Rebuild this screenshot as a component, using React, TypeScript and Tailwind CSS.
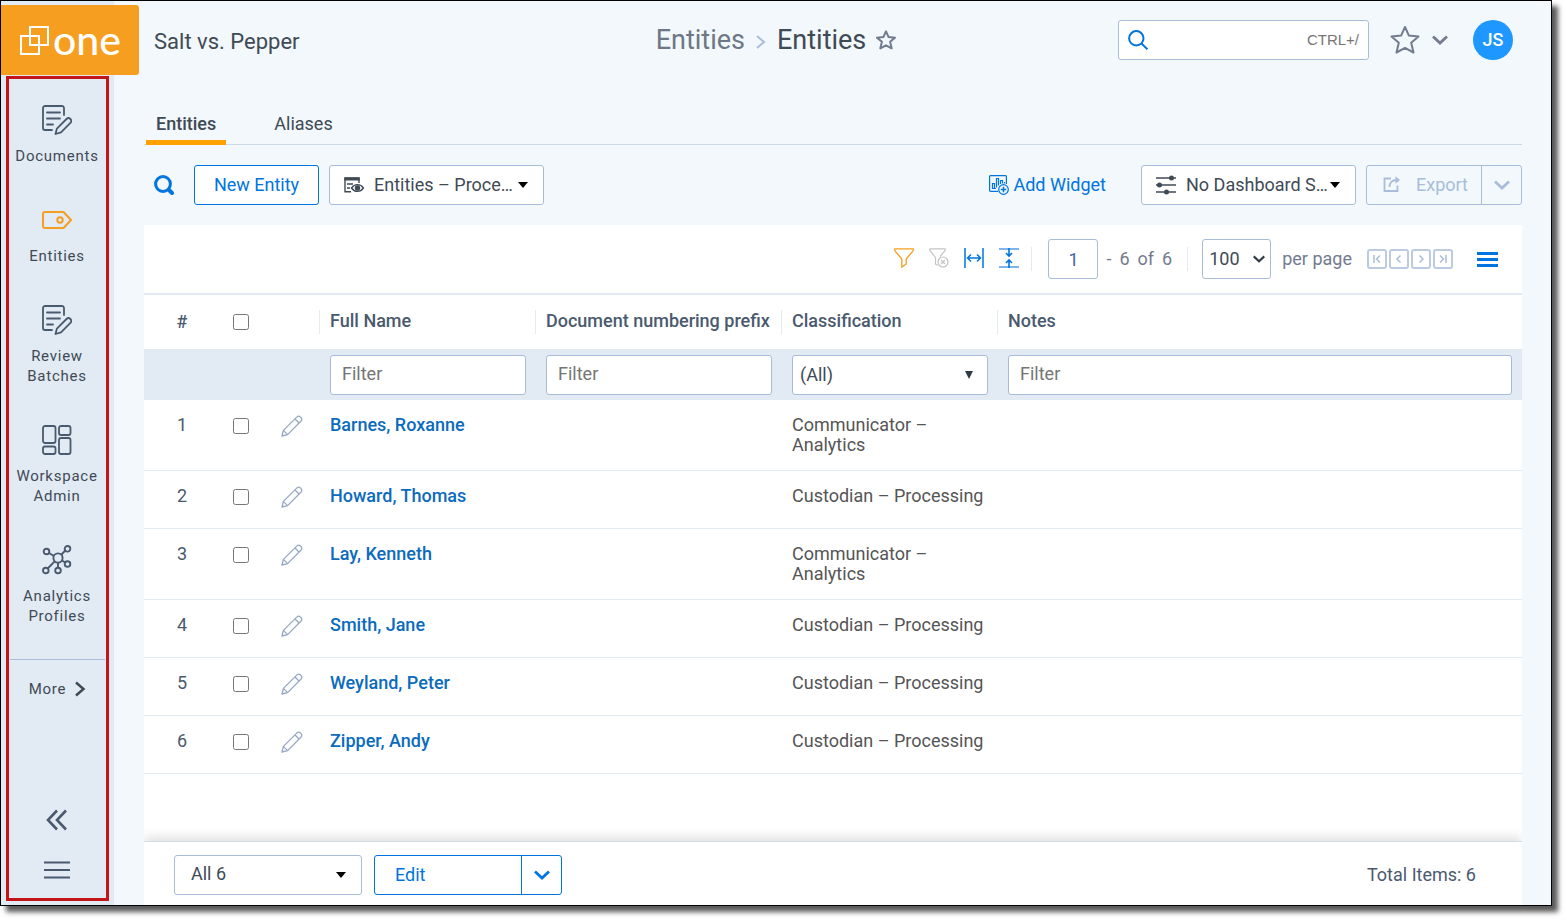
import type { ReactNode } from "react";

type Entity = {
    id: number;
    name: string;
    classification: string;
};

const entities: Entity[] = [
    { id: 1, name: "Barnes, Roxanne", classification: "Communicator – Analytics" },
    { id: 2, name: "Howard, Thomas", classification: "Custodian – Processing" },
    { id: 3, name: "Lay, Kenneth", classification: "Communicator – Analytics" },
    { id: 4, name: "Smith, Jane", classification: "Custodian – Processing" },
    { id: 5, name: "Weyland, Peter", classification: "Custodian – Processing" },
    { id: 6, name: "Zipper, Andy", classification: "Custodian – Processing" },
];

function DocumentIcon() {
    return (
        <svg width="30" height="30" viewBox="0 0 30 30" fill="none" stroke="#4a5a6e" strokeWidth="1.8" strokeLinecap="round" strokeLinejoin="round">
            <path d="M22 10V3a2 2 0 0 0-2-2H3a2 2 0 0 0-2 2v20a2 2 0 0 0 2 2h7" />
            <path d="M5 7.500h13M5 13.500h13M5 19.500h6" />
            <path d="M13.500 29l1.400-5.400L24.500 14a2.600 2.600 0 0 1 3.900 3.900L19 27.400z" />
        </svg>
    );
}

function TagIcon() {
    return (
        <svg width="30" height="30" viewBox="0 0 30 30" fill="none" stroke="#f69e20" strokeWidth="2" strokeLinejoin="round">
            <path d="M3 7h18.500L29 15l-7.500 8H3a2 2 0 0 1-2-2V9a2 2 0 0 1 2-2z" />
            <circle cx="18" cy="15" r="2.700" />
        </svg>
    );
}

function DashboardIcon() {
    return (
        <svg width="30" height="30" viewBox="0 0 30 30" fill="none" stroke="#4a5a6e" strokeWidth="1.800">
            <rect x="1" y="1" width="12.500" height="17" rx="2" />
            <rect x="17" y="1" width="11.500" height="9" rx="2" />
            <rect x="1" y="21.500" width="12.500" height="7.500" rx="2" />
            <rect x="17" y="13" width="11.500" height="16" rx="2" />
        </svg>
    );
}

function NetworkIcon() {
    return (
        <svg width="30" height="30" viewBox="0 0 30 30" fill="none" stroke="#4a5a6e" strokeWidth="1.900">
            <circle cx="16" cy="13" r="4.600" />
            <circle cx="4.500" cy="6.500" r="2.800" />
            <circle cx="25.500" cy="3.800" r="2.800" />
            <circle cx="25.500" cy="19" r="2.800" />
            <circle cx="3.800" cy="25.500" r="2.800" />
            <circle cx="16" cy="25.500" r="2.800" />
            <path d="M7 8l5 3M23.300 5.500L19.500 9.500M20 15.500l3.200 2M12.700 16.300l-7 7.200M16 17.600v5" />
        </svg>
    );
}

function StarIcon({ size }: { size: number }) {
    return (
        <svg width={size} height={size} viewBox="0 0 30 30" fill="none" stroke="#737b8e" strokeWidth={size > 24 ? 2 : 3} strokeLinejoin="round">
            <path d="M15 2l3.900 8.600 9.600.9-7.300 6.300 2.300 9.700L15 22.900l-8.500 4.600 2.300-9.700-7.300-6.300 9.600-.9z" />
        </svg>
    );
}

function SearchIcon({ bold }: { bold?: boolean }) {
    return bold ? (
        <svg width="20" height="20" viewBox="0 0 20 20" fill="none" stroke="#0075df" strokeLinecap="round">
            <circle cx="9" cy="9" r="7.400" strokeWidth="3" />
            <path d="M15 15l3 3" strokeWidth="4" />
        </svg>
    ) : (
        <svg width="20" height="20" viewBox="0 0 20 20" fill="none" stroke="#0075df" strokeWidth="2">
            <circle cx="8.300" cy="8.300" r="7.200" />
            <path d="M13.500 13.500l6 5.800" />
        </svg>
    );
}

function Chevron({ color, width = 16 }: { color: string; width?: number }) {
    return (
        <svg width={width} height="10" viewBox="0 0 16 10" fill="none" stroke={color} strokeWidth="2.800">
            <path d="M1 1.500l7 6.500 7-6.500" />
        </svg>
    );
}

function Caret({ className }: { className: string }) {
    return (
        <svg className={`pointer-events-none absolute ${className}`} width="10" height="6" viewBox="0 0 10 6">
            <path d="M0 0h10L5 6z" fill="#000" />
        </svg>
    );
}

function PencilIcon() {
    return (
        <svg width="22" height="22" viewBox="0 0 22 22" fill="none" stroke="#97a8c6" strokeWidth="1.300" strokeLinejoin="round">
            <path d="M1 21l1.400-5.600L16 1.900a2.300 2.300 0 0 1 3.300 0l.8.800a2.300 2.300 0 0 1 0 3.300L6.600 19.600z" />
            <path d="M14 4l4 4M2.400 15.400l4.200 4.200" />
        </svg>
    );
}

function ViewIcon() {
    return (
        <svg width="20" height="16" viewBox="0 0 20 16" fill="none" stroke="#404a55" strokeWidth="1.400">
            <path d="M7 14.700H1V1h14v5" />
            <path d="M.3 2h15.400" strokeWidth="3" />
            <path d="M3 7h6M3 11h3" />
            <path d="M7.500 11c3-4.500 9-4.500 12 0-3 4.500-9 4.500-12 0z" fill="#fff" />
            <circle cx="13.500" cy="11" r="2" fill="#404a55" />
        </svg>
    );
}

function SlidersIcon() {
    return (
        <svg width="22" height="20" viewBox="0 0 22 20" stroke="#404a55" strokeWidth="1.600" fill="#404a55">
            <path d="M1 3h20M1 10h20M1 17h20" />
            <circle cx="16.500" cy="3" r="1.700" />
            <circle cx="4.500" cy="10" r="1.700" />
            <circle cx="11.500" cy="17" r="1.700" />
        </svg>
    );
}

function WidgetIcon() {
    return (
        <svg width="20" height="20" viewBox="0 0 20 20" fill="none" stroke="#0075df" strokeWidth="1.200">
            <path d="M9 16.400H1.500a.9.900 0 0 1-.9-.9v-14a.9.900 0 0 1 .9-.9h15a.9.900 0 0 1 .9.900V9" />
            <path d="M3.500 13.500V8.500h2v5zM7.500 12.500v-9h2v7M11.500 9V5.500h2v3M15.500 8.500V7M3 13.500h4" />
            <circle cx="14.500" cy="14.500" r="4.800" />
            <path d="M14.500 11.800v5.400M11.800 14.500h5.400" strokeWidth="1.500" />
        </svg>
    );
}

function ExportIcon() {
    return (
        <svg width="18" height="18" viewBox="0 0 18 18" fill="none" stroke="#a9bddb" strokeWidth="1.800">
            <path d="M8 2.500H1.500v12.500h13v-5.500" />
            <path d="M6.500 11c0-4.500 2.500-7 7-7" />
            <path d="M12.500.300l4.500 3.700-4.500 3.700z" fill="#a9bddb" stroke="none" />
        </svg>
    );
}

function FilterIcon() {
    return (
        <svg width="20" height="20" viewBox="0 0 20 20" fill="none" stroke="#f69e20" strokeWidth="1.300" strokeLinejoin="round">
            <path d="M.8.800h18.400v1.800l-7 8.400v5l-4.400 3.200V11L.8 2.600z" />
        </svg>
    );
}

function ClearFilterIcon() {
    return (
        <svg width="20" height="20" viewBox="0 0 20 20" fill="none" stroke="#c3c3c3" strokeWidth="1.200" strokeLinejoin="round">
            <path d="M8.500 17.500l-2-1.500v-6.500L.8 2.300V.800h15.400v1.500l-5 6.200" />
            <circle cx="14" cy="14" r="5" />
            <path d="M12 12l4 4M16 12l-4 4" />
        </svg>
    );
}

function FitWidthIcon() {
    return (
        <svg width="20" height="20" viewBox="0 0 20 20" fill="none" stroke="#0075df" strokeWidth="1.500">
            <path d="M1 0v20M19 0v20M3.500 10h13M7 6.500L3.500 10 7 13.500M13 6.500l3.500 3.500-3.500 3.500" />
        </svg>
    );
}

function FitHeightIcon() {
    return (
        <svg width="20" height="22" viewBox="0 0 20 22" fill="none" stroke="#0075df" strokeWidth="1.600">
            <path d="M0 2h20M0 20h20" stroke="#7db5ef" strokeWidth="2" />
            <path d="M10 1v7.500M10 21v-7.500M7 6l3 3 3-3M7 16l3-3 3 3" />
        </svg>
    );
}

function NavItem({ label, active, children }: { label: string; active?: boolean; children: ReactNode }) {
    return (
        <a href="#" aria-current={active ? "page" : undefined} className="flex flex-col items-center gap-[11px] text-center text-[15px] leading-5 tracking-wider text-[#404a55]">
            {children}
            <span className="w-[88px]">{label}</span>
        </a>
    );
}

function Sidebar() {
    return (
        <aside className="flex w-[113px] shrink-0 bg-[#e2eaf4] pb-1 pl-[5px]">
            <div className="flex w-[103px] flex-col border-[3px] border-[#c31519] pr-px">
                <nav className="flex flex-col items-center gap-[39px] pt-[26px]">
                    <NavItem label="Documents"><DocumentIcon /></NavItem>
                    <NavItem label="Entities" active><TagIcon /></NavItem>
                    <NavItem label="Review Batches"><DocumentIcon /></NavItem>
                    <NavItem label="Workspace Admin"><DashboardIcon /></NavItem>
                    <NavItem label="Analytics Profiles"><NetworkIcon /></NavItem>
                </nav>
                <button className="ml-px mt-[33px] flex items-center justify-center gap-2 border-t border-[#a9bddb] pt-[19px] text-[15px] leading-5 tracking-wider text-[#404a55]">
                    More
                    <svg width="12" height="16" viewBox="0 0 12 16" fill="none" stroke="#404a55" strokeWidth="2.500">
                        <path d="M2 1.500L9.500 8 2 14.500" />
                    </svg>
                </button>
                <div className="mt-auto flex flex-col items-center gap-[29px] pb-[18px]">
                    <button aria-label="Collapse sidebar">
                        <svg width="22" height="22" viewBox="0 0 22 22" fill="none" stroke="#4a5a6e" strokeWidth="2.600">
                            <path d="M11 1.500L2 11l9 9.500M20 1.500L11 11l9 9.500" />
                        </svg>
                    </button>
                    <button aria-label="Menu">
                        <svg width="26" height="20" viewBox="0 0 26 20" stroke="#4a5a6e" strokeWidth="2">
                            <path d="M0 2.500h26M0 10h26M0 17.500h26" />
                        </svg>
                    </button>
                </div>
            </div>
        </aside>
    );
}

function Header() {
    return (
        <header className="grid h-[75px] shrink-0 grid-cols-[1fr_auto_1fr]">
            <div className="flex">
                <div className="w-[113px] bg-[#e2eaf4] pt-1">
                    <a href="#" className="relative flex h-[70px] w-[138px] items-center gap-1 rounded-r-[3px] bg-[#f69e20] pl-[19px] text-white">
                        <svg width="29" height="29" viewBox="0 0 29 29" fill="none" stroke="#fff" strokeWidth="2">
                            <path d="M10 1h18v18H10zM1 10h18v18H1z" />
                        </svg>
                        <span className="font-[Lato] text-[41px] leading-10 font-medium">one</span>
                    </a>
                </div>
                <span className="ml-10 pt-[25px] text-[22px] leading-8 whitespace-nowrap">Salt vs. Pepper</span>
            </div>
            <nav className="flex h-[78px] items-center gap-[10px] text-[27px] leading-10">
                <a href="#" className="text-[#6d7785]">Entities</a>
                <svg className="mt-1" width="12" height="14" viewBox="0 0 12 14" fill="none" stroke="#a9bddb" strokeWidth="2">
                    <path d="M2 1l7 6-7 6" />
                </svg>
                <span>Entities</span>
                <button aria-label="Add to favorites"><StarIcon size={20} /></button>
            </nav>
            <div className="flex h-[78px] items-center justify-end pr-[38px]">
                <label className="flex h-10 w-[251px] items-center rounded-[3px] border border-[#a9bddb] bg-white px-[9px]">
                    <SearchIcon />
                    <input aria-label="Search" placeholder="CTRL+/" className="min-w-0 flex-1 text-right font-['Liberation_Sans'] text-[15px] outline-none placeholder:text-[#757575]" />
                </label>
                <button aria-label="Favorites" className="ml-[21px] flex items-center gap-3">
                    <StarIcon size={30} />
                    <Chevron color="#737b8e" />
                </button>
                <button className="ml-[25px] size-10 rounded-full bg-[#1e98ff] text-lg font-medium text-white">JS</button>
            </div>
        </header>
    );
}

function Toolbar() {
    return (
        <div className="mt-5 flex items-center pl-[10px] text-lg">
            <button aria-label="Show filters"><SearchIcon bold /></button>
            <button className="ml-5 h-10 w-[125px] rounded-[3px] border border-[#0075df] bg-white text-[#0075df]">New Entity</button>
            <div className="relative ml-[10px] flex w-[215px] items-center">
                <select aria-label="View" className="h-10 w-full appearance-none rounded-[3px] border border-[#a9bddb] bg-white pl-11">
                    <option>Entities – Proce…</option>
                </select>
                <div className="pointer-events-none absolute left-[15px]"><ViewIcon /></div>
                <Caret className="right-4" />
            </div>
            <button className="ml-auto flex items-center gap-1 text-[#0075df]">
                <WidgetIcon />
                Add Widget
            </button>
            <div className="relative ml-[35px] flex w-[215px] items-center">
                <select aria-label="Dashboard" className="h-10 w-full appearance-none rounded-[3px] border border-[#a9bddb] bg-white pl-11">
                    <option>No Dashboard S…</option>
                </select>
                <div className="pointer-events-none absolute left-[14px]"><SlidersIcon /></div>
                <Caret className="right-4" />
            </div>
            <div className="ml-[10px] flex h-10 w-[156px] rounded-[3px] border border-[#a9bddb] text-[#a9bddb]">
                <button disabled className="flex flex-1 items-center gap-[15px] pl-4">
                    <ExportIcon />
                    Export
                </button>
                <button disabled aria-label="Export options" className="flex w-10 items-center justify-center border-l border-[#a9bddb]">
                    <Chevron color="#a9bddb" />
                </button>
            </div>
        </div>
    );
}

function PageButton({ label, d }: { label: string; d: string }) {
    return (
        <button aria-label={label} className="flex size-5 items-center justify-center rounded-[3px] border-2 border-[#bccbe2]">
            <svg width="10" height="10" viewBox="0 0 10 10" fill="none" stroke="#a9bddb" strokeWidth="1.500">
                <path d={d} />
            </svg>
        </button>
    );
}

function GridToolbar() {
    return (
        <div className="flex h-[70px] items-center justify-end border-b-2 border-[#e2eaf4] pr-6 text-lg text-[#737b8e]">
            <div className="flex items-center gap-[15px] pb-0.5">
                <button aria-label="Filter"><FilterIcon /></button>
                <button aria-label="Clear filter"><ClearFilterIcon /></button>
                <button aria-label="Fit width"><FitWidthIcon /></button>
                <button aria-label="Fit height"><FitHeightIcon /></button>
            </div>
            <div className="ml-3 h-6 w-px bg-[#e2eaf4]" />
            <input aria-label="First item" defaultValue="1" className="ml-4 h-10 w-[50px] rounded-[3px] border border-[#a9bddb] text-center text-[#4a5fa0]" />
            <div className="ml-2 flex gap-2">
                <span>-</span>
                <span>6</span>
                <span>of</span>
                <span>6</span>
            </div>
            <div className="ml-[15px] h-6 w-px bg-[#e2eaf4]" />
            <label className="relative ml-[14px] flex items-center gap-[11px]">
                <select aria-label="Items per page" className="h-10 w-[69px] appearance-none rounded-[3px] border border-[#a9bddb] pl-[6px] text-[#404a55]">
                    <option>100</option>
                </select>
                <span className="pointer-events-none absolute left-[51px]"><Chevron color="#303a45" width={12} /></span>
                per page
            </label>
            <div className="ml-[15px] flex gap-[2px]">
                <PageButton label="First page" d="M2 1v8M8 1.500L4.500 5 8 8.500" />
                <PageButton label="Previous page" d="M6.500 1.500L3 5l3.500 3.500" />
                <PageButton label="Next page" d="M3.500 1.500L7 5 3.500 8.500" />
                <PageButton label="Last page" d="M8 1v8M2 1.500L5.500 5 2 8.500" />
            </div>
            <button aria-label="Grid menu" className="ml-6">
                <svg width="21" height="15" viewBox="0 0 21 15" stroke="#0075df" strokeWidth="3">
                    <path d="M0 1.500h21M0 7.500h21M0 13.500h21" />
                </svg>
            </button>
        </div>
    );
}

function HeaderCell({ children, last }: { children?: ReactNode; last?: boolean }) {
    return (
        <th className="p-0 text-left font-medium">
            <div className={last ? "h-6 pl-[10px] leading-[22px]" : "h-6 border-r border-[#e2eaf4] pl-[10px] leading-[22px]"}>{children}</div>
        </th>
    );
}

function FilterCell({ label }: { label: string }) {
    return (
        <td className="px-[10px]">
            <input aria-label={label} placeholder="Filter" className="block h-10 w-full rounded-[3px] border border-[#a9bddb] bg-white px-[11px] pb-0.5 placeholder:text-[#757575]" />
        </td>
    );
}

function EntityTable() {
    return (
        <table className="w-full table-fixed border-collapse text-lg">
            <colgroup>
                <col className="w-[76px]" />
                <col className="w-[42px]" />
                <col className="w-[58px]" />
                <col className="w-[216px]" />
                <col className="w-[246px]" />
                <col className="w-[216px]" />
                <col />
            </colgroup>
            <thead className="text-[#4a5a6e]">
                <tr className="h-[54px]">
                    <th className="font-medium">#</th>
                    <th className="p-0"><input type="checkbox" aria-label="Select all" className="mx-auto block size-4" /></th>
                    <HeaderCell />
                    <HeaderCell>Full Name</HeaderCell>
                    <HeaderCell>Document numbering prefix</HeaderCell>
                    <HeaderCell>Classification</HeaderCell>
                    <HeaderCell last>Notes</HeaderCell>
                </tr>
                <tr className="h-[51px] bg-[#e2eaf4]">
                    <td colSpan={3} />
                    <FilterCell label="Filter full name" />
                    <FilterCell label="Filter prefix" />
                    <td className="px-[10px]">
                        <div className="relative flex items-center">
                            <select aria-label="Filter classification" className="h-10 w-full appearance-none rounded-[3px] border border-[#a9bddb] bg-white pl-[7px] text-[#404a55]">
                                <option>(All)</option>
                            </select>
                            <svg className="pointer-events-none absolute right-[15px]" width="8" height="8" viewBox="0 0 8 8">
                                <path d="M0 0h8L4 8z" fill="#303a45" />
                            </svg>
                        </div>
                    </td>
                    <FilterCell label="Filter notes" />
                </tr>
            </thead>
            <tbody>
                {entities.map((entity) => (
                    <tr key={entity.id} className="border-b border-[#e2eaf4] align-top leading-5 text-[#555]">
                        <td className="pt-[15px] text-center text-[#4a5a6e]">{entity.id}</td>
                        <td className="pt-[18px]"><input type="checkbox" aria-label={`Select ${entity.name}`} className="mx-auto block size-4" /></td>
                        <td className="pt-[15px] pl-px"><button aria-label={`Edit ${entity.name}`} className="mx-auto block"><PencilIcon /></button></td>
                        <td className="pt-[15px] pl-[10px] font-medium"><a href="#" className="text-[#0b6bbd]">{entity.name}</a></td>
                        <td />
                        <td className="pt-[15px] pr-[10px] pb-[15px] pl-[10px]">
                            <div className={entity.classification.startsWith("Comm") ? "w-[150px]" : "mb-[7px] whitespace-nowrap"}>{entity.classification}</div>
                        </td>
                        <td />
                    </tr>
                ))}
            </tbody>
        </table>
    );
}

function Footer() {
    return (
        <div className="mt-auto flex h-16 items-center border-t border-[#d3dde8] bg-white pt-0.5 pr-[46px] pl-[30px] text-lg shadow-[0_-4px_10px_rgba(0,0,0,0.12)]">
            <div className="relative flex w-[188px] items-center">
                <select aria-label="Items" className="h-10 w-full appearance-none rounded-[3px] border border-[#a9bddb] pb-0.5 pl-4">
                    <option>All 6</option>
                </select>
                <Caret className="right-4" />
            </div>
            <div className="ml-3 flex h-10 w-[188px] rounded-[3px] border border-[#0075df] text-[#0075df]">
                <button className="flex-1 pl-5 text-left">Edit</button>
                <button aria-label="Edit options" className="flex w-10 items-center justify-center border-l border-[#0075df]">
                    <Chevron color="#0075df" />
                </button>
            </div>
            <span className="ml-auto text-[#4a5a6e]">Total Items: 6</span>
        </div>
    );
}

export default function App() {
    return (
        <div className="h-screen bg-white pr-[15px] pb-4 font-[Roboto,sans-serif] text-[#404a55]">
            <div className="flex h-full flex-col border border-black bg-[#f2f8fb] shadow-[6px_6px_5px_rgba(0,0,0,0.65)]">
                <Header />
                <div className="flex min-h-0 flex-1">
                    <Sidebar />
                    <main className="flex min-w-0 flex-1 flex-col pr-[29px] pl-[30px]">
                        <nav className="mt-7 flex gap-[38px] border-b border-[#cbdae6] pl-0.5 text-lg leading-8">
                            <a href="#" aria-current="page" className="-mb-px border-b-[5px] border-[#ffa200] px-[10px] pt-1 font-medium">Entities</a>
                            <a href="#" className="px-[10px] pt-1">Aliases</a>
                        </nav>
                        <Toolbar />
                        <section className="mt-5 flex min-h-0 flex-1 flex-col overflow-hidden bg-white">
                            <GridToolbar />
                            <EntityTable />
                            <Footer />
                        </section>
                    </main>
                </div>
            </div>
        </div>
    );
}
